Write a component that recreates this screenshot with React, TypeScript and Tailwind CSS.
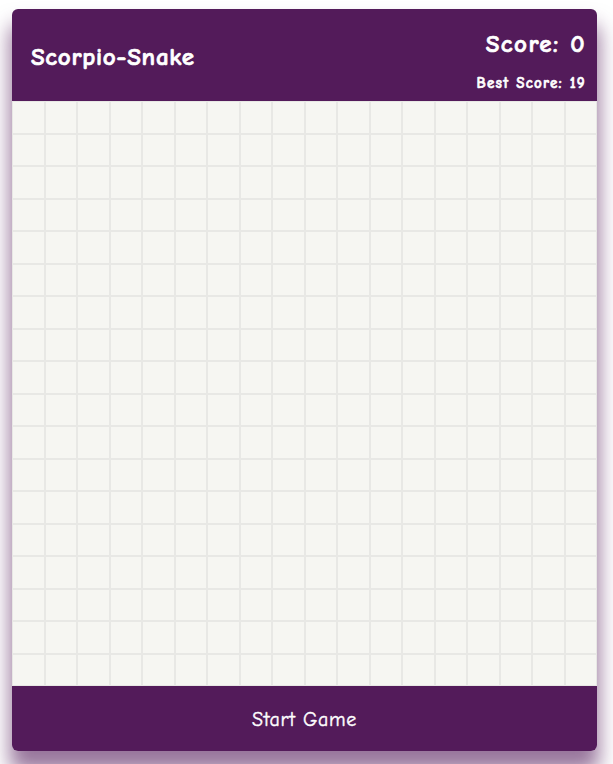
import React from "react";

const cells = Array.from({ length: 18 * 18 });

export default function App() {
  return (
    <div className="min-h-[764px] bg-white pt-[9px] pl-[12px]" style={{ fontFamily: "'Comic Sans MS', 'Comic Neue', 'Noto Sans', sans-serif" }}>
      <div className="w-[585px] rounded-md overflow-hidden shadow-[0_18px_20px_2px_rgba(84,27,90,0.6)]">
        <div className="h-[92px] bg-[#531b5a] flex items-center justify-between pl-[19px] pr-[11px] text-white">
          <div className="text-[25px] font-bold tracking-[0.7px] pt-[4px] [-webkit-text-stroke:0.7px_white]">Scorpio-Snake</div>
          <div className="flex flex-col items-end pt-[10px]">
            <div className="text-[25px] font-bold tracking-[1.5px] leading-[30px] [-webkit-text-stroke:0.7px_white]">Score: 0</div>
            <div className="text-[15px] font-bold tracking-[1.3px] mt-[16px] leading-[16px] [-webkit-text-stroke:0.6px_white]">Best Score: 19</div>
          </div>
        </div>
        <div className="grid grid-cols-[repeat(18,1fr)] bg-[#f6f6f2]">
          {cells.map((_, i) => (
            <div key={i} className="h-[32.5px] border border-[#e8e8e5]" />
          ))}
        </div>
        <div className="h-[65px] bg-[#531b5a] flex items-center justify-center pt-[3px] text-white text-[20px] tracking-[0.7px] [-webkit-text-stroke:0.4px_white]">
          Start Game
        </div>
      </div>
    </div>
  );
}
